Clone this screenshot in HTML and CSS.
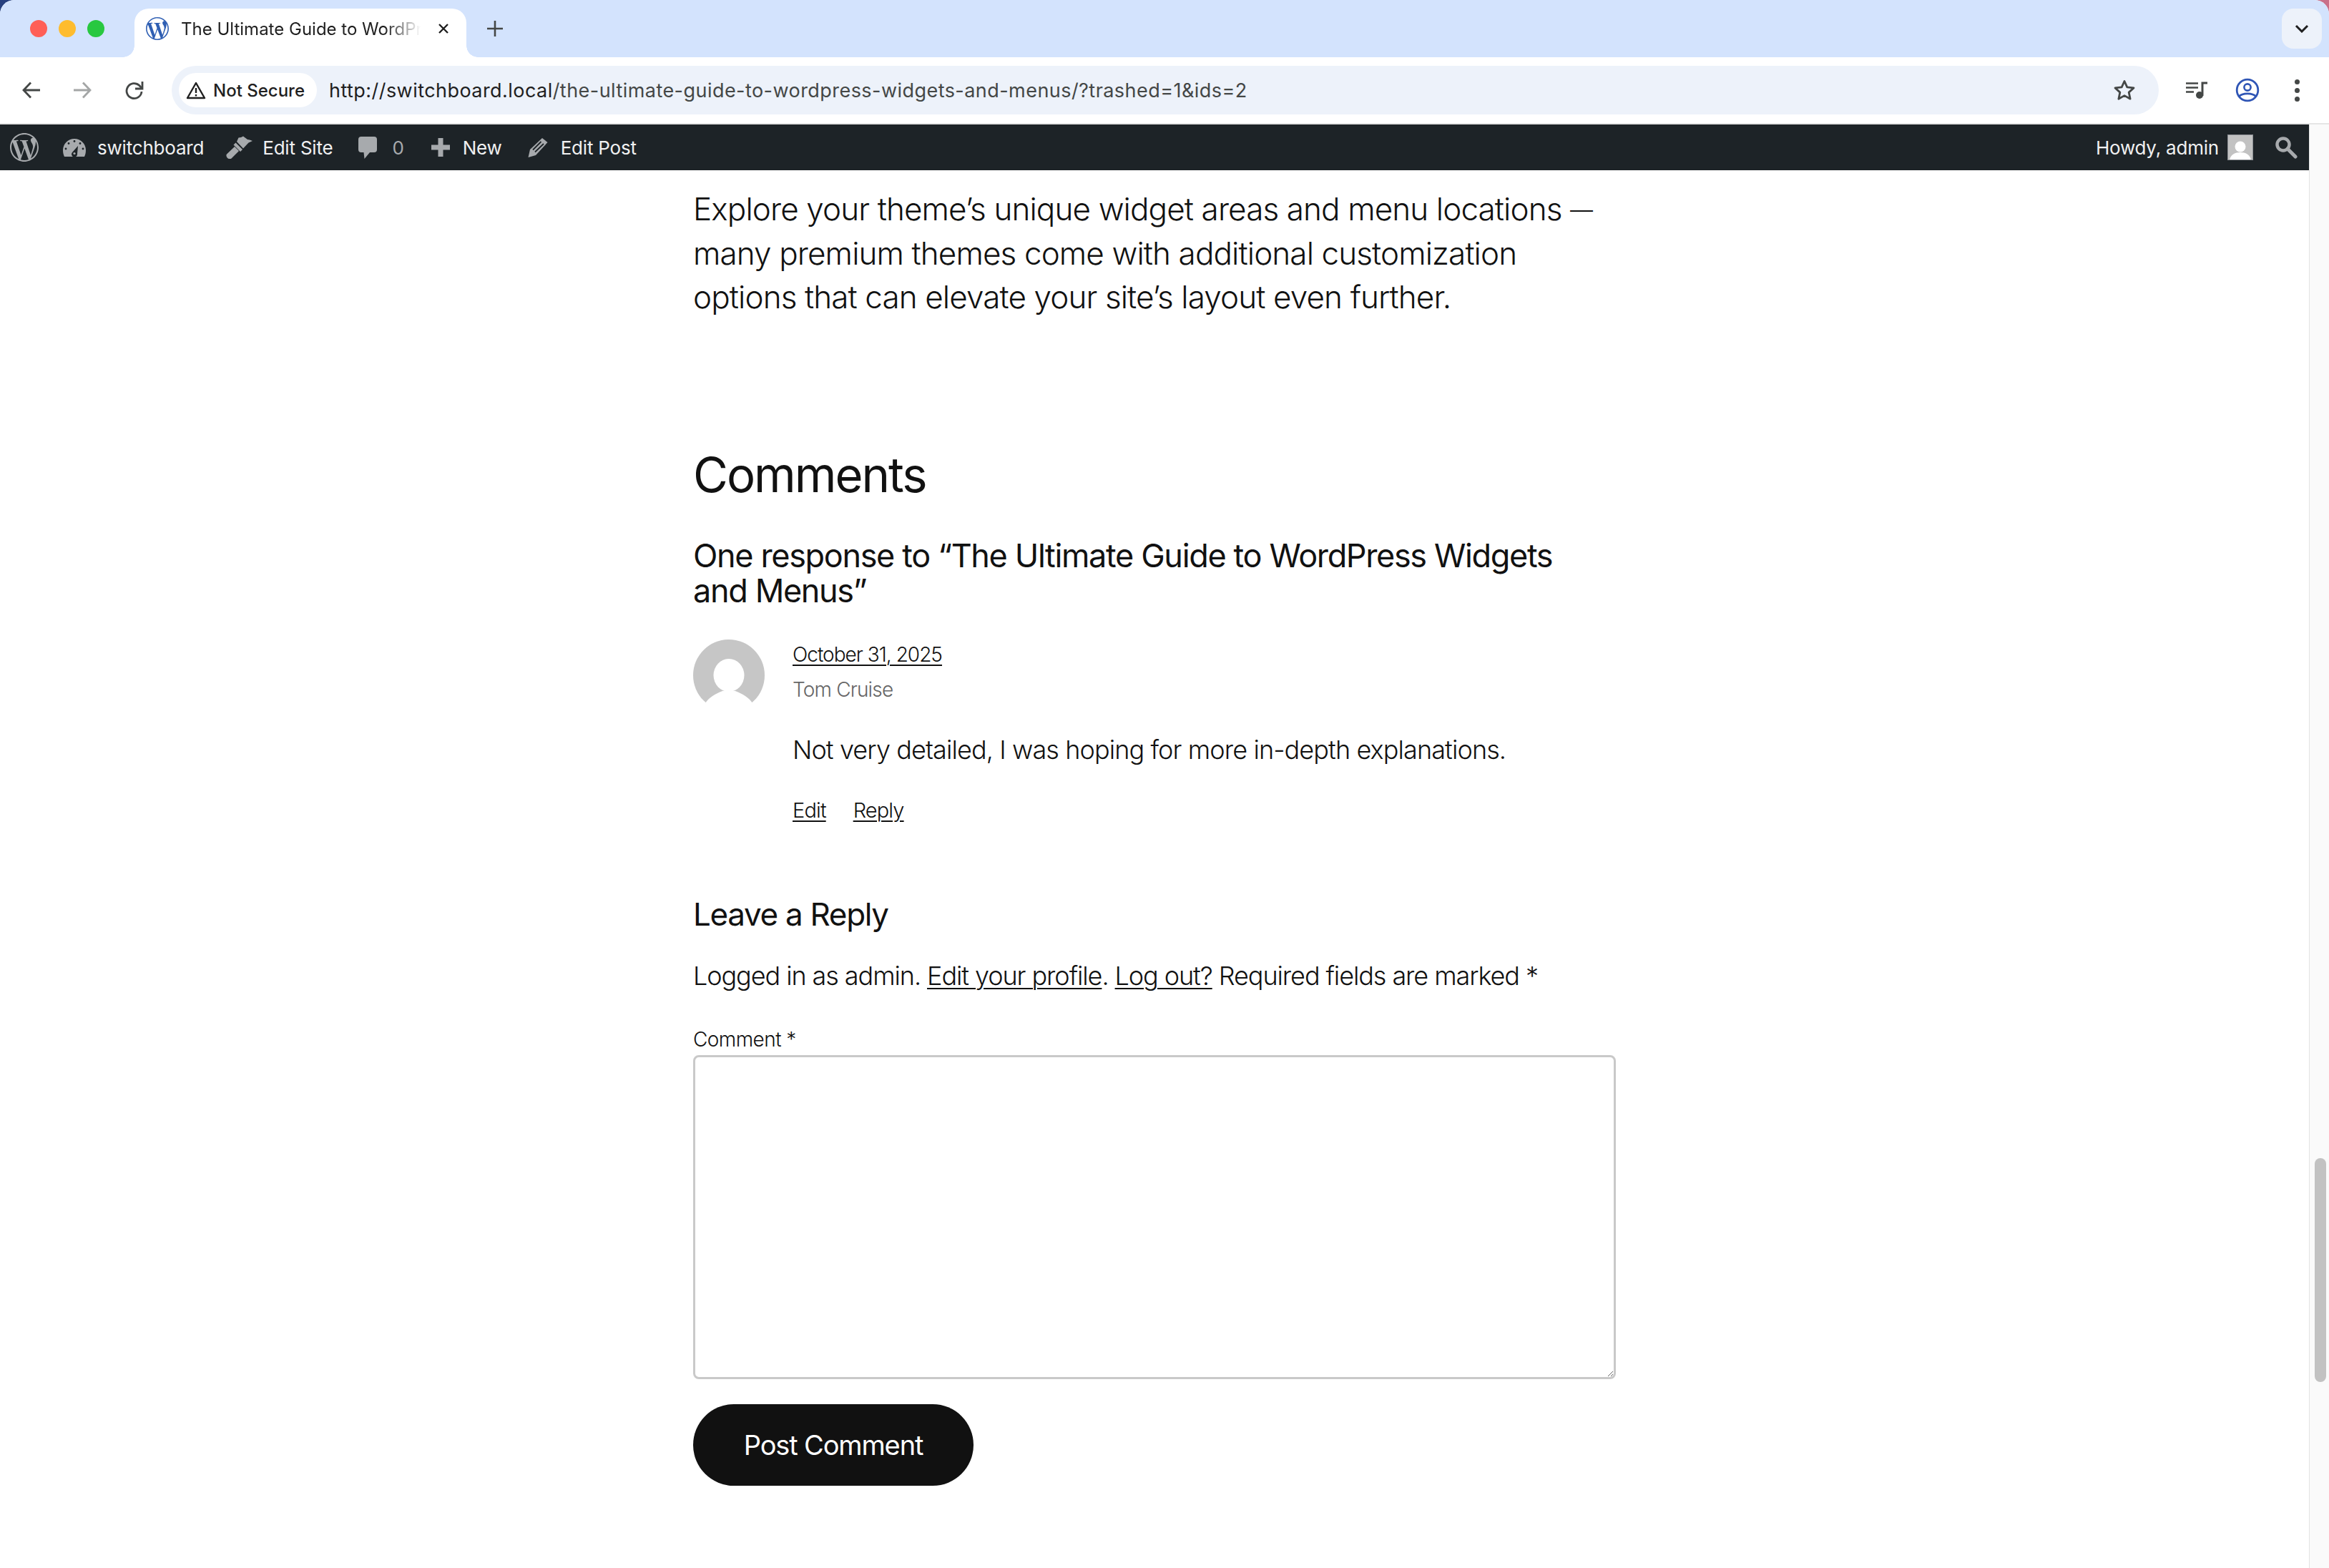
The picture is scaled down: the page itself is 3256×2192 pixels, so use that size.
FILE: index.html
```html
<!DOCTYPE html>
<html lang="en">
<head>
  <meta charset="UTF-8" />
  <title>The Ultimate Guide to WordPress Widgets and Menus</title>
  <link rel="stylesheet" href="styles.css">
</head>
<body>
  <svg class="defs" width="0" height="0">
    <symbol id="wp" viewBox="0 0 24 24"><path fill-rule="evenodd" d="M21.469 6.825c.84 1.537 1.318 3.3 1.318 5.175 0 3.979-2.156 7.456-5.363 9.325l3.295-9.527c.615-1.54.82-2.771.82-3.864 0-.405-.026-.78-.07-1.11m-7.981.105c.647-.03 1.232-.105 1.232-.105.582-.075.514-.93-.067-.899 0 0-1.755.135-2.88.135-1.064 0-2.85-.15-2.85-.15-.585-.03-.661.855-.075.885 0 0 .54.061 1.125.09l1.68 4.605-2.37 7.08L5.354 6.9c.649-.03 1.234-.1 1.234-.1.585-.075.516-.93-.065-.896 0 0-1.746.138-2.874.138-.2 0-.438-.008-.69-.015C4.911 3.15 8.235 1.215 12 1.215c2.809 0 5.365 1.072 7.286 2.833-.046-.003-.091-.009-.141-.009-1.06 0-1.812.923-1.812 1.914 0 .89.513 1.643 1.06 2.531.411.72.89 1.643.89 2.977 0 .915-.354 1.994-.821 3.479l-1.075 3.585-3.9-11.61.001.014zM12 22.784c-1.059 0-2.081-.153-3.048-.437l3.237-9.406 3.315 9.087c.024.053.05.101.078.149-1.12.393-2.325.609-3.582.609M1.211 12c0-1.564.336-3.05.935-4.39L7.29 21.709C3.694 19.96 1.212 16.271 1.211 12M12 0C5.385 0 0 5.385 0 12s5.385 12 12 12 12-5.385 12-12S18.615 0 12 0"/></symbol>
  </svg>

  <div class="window">
    <!-- tab strip -->
    <div class="tabbar">
      <div class="lights"><span class="light red"></span><span class="light amber"></span><span class="light green"></span></div>
      <div class="tab">
        <span class="favicon"><svg width="32" height="32"><use href="#wp"/></svg></span>
        <span class="tab-title">The Ultimate Guide to WordPress Widgets and Menus</span>
        <svg class="tab-close" width="16" height="16" viewBox="0 0 16 16"><path d="M2 2l12 12M14 2L2 14" stroke="#1f1f1f" stroke-width="2.4" fill="none"/></svg>
      </div>
      <svg class="new-tab" width="24" height="24" viewBox="0 0 24 24"><path d="M12 1v22M1 12h22" stroke="#444746" stroke-width="2.6" fill="none"/></svg>
      <div class="tab-search"><svg width="20" height="12" viewBox="0 0 20 12"><path d="M2 2l8 8 8-8" stroke="#1f1f1f" stroke-width="3" fill="none"/></svg></div>
    </div>

    <!-- toolbar -->
    <div class="toolbar">
      <svg class="tool" width="28" height="28" viewBox="0 0 28 28"><path d="M26 14H4M13 3.500L3 14l10 10.500" stroke="#444746" stroke-width="2.800" fill="none"/></svg>
      <svg class="tool tool-fwd" width="28" height="28" viewBox="0 0 28 28"><path d="M2 14h22M15 3.500L25 14 15 24.500" stroke="#a4a6a6" stroke-width="2.800" fill="none"/></svg>
      <svg class="tool tool-reload" width="28" height="30" viewBox="0 0 28 30"><path d="M24 17a10.500 10.500 0 1 1-3.200-8.500L24 12" stroke="#444746" stroke-width="2.800" fill="none"/><path d="M25 3v10H15" fill="none" stroke="#444746" stroke-width="2.800"/></svg>
      <div class="omnibox">
        <div class="chip">
          <svg width="28" height="26" viewBox="0 0 28 26"><path d="M14 3L26 24H2z" stroke="#1f1f1f" stroke-width="2.400" fill="none" stroke-linejoin="round"/><path d="M14 10v7M14 19v2.500" stroke="#1f1f1f" stroke-width="2.400" fill="none"/></svg>
          <span>Not Secure</span>
        </div>
        <div class="url"><span class="url-host">http://switchboard.local</span>/the-ultimate-guide-to-wordpress-widgets-and-menus/?trashed=1&amp;ids=2</div>
        <svg class="star" width="32" height="32" viewBox="0 0 32 32"><path d="M16 3.500l3.800 8.400 9.200 1-6.800 6.200 1.900 9.100L16 23.600l-8.100 4.600 1.900-9.100L3 12.900l9.200-1z" stroke="#444746" stroke-width="2.800" fill="none" stroke-linejoin="round"/></svg>
      </div>
      <svg class="media" width="32" height="24" viewBox="0 0 32 24"><path d="M1 2.500h17M1 8.500h17M1 14.500h11" stroke="#444746" stroke-width="2.600" fill="none"/><path d="M24 20V2h7" stroke="#444746" stroke-width="3" fill="none"/><circle cx="20" cy="19" r="5" fill="#444746"/></svg>
      <svg class="profile" width="34" height="34" viewBox="0 0 34 34"><circle cx="17" cy="17" r="14.800" stroke="#2f55b5" stroke-width="2.800" fill="none"/><circle cx="17" cy="13" r="4.600" stroke="#2f55b5" stroke-width="2.600" fill="none"/><path d="M5 26c5-5.500 19-5.500 24 0" stroke="#2f55b5" stroke-width="2.800" fill="none"/></svg>
      <div class="dots"><span></span><span></span><span></span></div>
    </div>

    <div class="viewport">
      <div class="page">
        <!-- wp admin bar -->
        <div class="adminbar">
          <div class="ab-left">
            <svg class="ab-logo" width="40" height="40"><use href="#wp"/></svg>
            <div class="ab-item ab-site">
              <svg width="32" height="25" viewBox="0 0 32 25"><path d="M16 0C7 0 0 7 0 16c0 3.500.8 6.500 2 9h28c1.200-2.500 2-5.500 2-9C32 7 25 0 16 0z"/><g fill="#1d2327"><circle cx="16" cy="3.500" r="1.400"/><circle cx="8" cy="6.500" r="1.400"/><circle cx="24" cy="6.500" r="1.400"/><circle cx="4" cy="14" r="1.400"/><circle cx="28" cy="14" r="1.400"/><path d="M21 10l-1 11a4 4 0 1 1-7-2z"/></g><circle cx="16" cy="20.500" r="1.600"/></svg>
              <span>switchboard</span>
            </div>
            <div class="ab-item ab-brush">
              <svg width="37" height="32" viewBox="0 0 37 32"><path d="M1 25.500l11-10.500 6 6-10.500 10.500c-1.500 1.300-3.800.8-5.300-.6S-.3 27 1 25.500z"/><path d="M10.500 12.500l3-3 9.500 9.500-3 3z"/><path d="M15 8l9 9.500 7.500-8 5.500-2.500-4-1.500-3-.5-6-4.500-3 1.500-3.500.5z"/></svg>
              <span>Edit Site</span>
            </div>
            <div class="ab-item ab-count">
              <svg width="26" height="31" viewBox="0 0 26 31"><path d="M4 0h18a4 4 0 0 1 4 4v14a4 4 0 0 1-4 4h-6l-7.500 9-1-9H4a4 4 0 0 1-4-4V4a4 4 0 0 1 4-4z"/></svg>
              <span>0</span>
            </div>
            <div class="ab-item ab-plus">
              <svg width="26" height="26" viewBox="0 0 26 26"><path d="M9.500 0h7v9.500H26v7h-9.500V26h-7v-9.500H0v-7h9.500z"/></svg>
              <span>New</span>
            </div>
            <div class="ab-item">
              <svg width="28" height="28" viewBox="0 0 28 28"><path d="M20 1l7.500 6L11 25 .5 28 3 17z"/><path d="M7 17.500L18.500 6M10 20.500L22 9" stroke="#1d2327" stroke-width="1.800" fill="none"/></svg>
              <span>Edit Post</span>
            </div>
          </div>
          <div class="ab-right">
            <span>Howdy, admin</span>
            <svg class="ab-avatar" width="36" height="36" viewBox="0 0 36 36"><rect width="36" height="36" fill="#c2c2c2"/><circle cx="18" cy="17" r="7.500" fill="#fff"/><path d="M3 36c1-8 8-11 15-11s14 3 15 11z" fill="#fff"/><rect x=".5" y=".5" width="35" height="35" fill="none" stroke="#8c8f94"/></svg>
            <svg class="ab-search" width="32" height="32" viewBox="0 0 32 32"><circle cx="12" cy="12" r="8.500" stroke="#a7aaad" stroke-width="4.500" fill="none"/><path d="M18 18l11 11" stroke="#a7aaad" stroke-width="5" stroke-linecap="round"/></svg>
          </div>
        </div>

        <!-- post content -->
        <main class="post">
          <p class="lead">Explore your theme’s unique widget areas and menu locations <span class="dash">—</span><br>many premium themes come with additional customization<br>options that can elevate your site’s layout even further.</p>

          <h2 class="comments-title">Comments</h2>
          <h3 class="responses">One response to “The Ultimate Guide to WordPress Widgets<br>and Menus”</h3>

          <div class="comment">
            <div class="comment-avatar">
              <svg width="100" height="100" viewBox="0 0 100 100"><circle cx="50" cy="50" r="50" fill="#c6c6c6"/><ellipse cx="50" cy="50" rx="21.500" ry="23" fill="#fff"/><path d="M41 72C31 76 22 81 17 89v11h66V89C78 81 69 76 59 72z" fill="#fff"/></svg>
            </div>
            <div class="comment-body">
              <a class="comment-date" href="#">October 31, 2025</a>
              <div class="comment-author">Tom Cruise</div>
              <p class="comment-text">Not very detailed, I was hoping for more in-depth explanations.</p>
              <div class="comment-links"><a href="#">Edit</a><a href="#">Reply</a></div>
            </div>
          </div>

          <h3 class="reply-title">Leave a Reply</h3>
          <p class="logged-in">Logged in as admin. <a href="#">Edit your profile</a>. <a href="#">Log out?</a> Required fields are marked *</p>
          <label class="comment-label" for="comment">Comment *</label>
          <textarea class="comment-input" id="comment"></textarea>
          <button class="submit">Post Comment</button>
        </main>
      </div>
      <div class="scrollbar"><div class="thumb"></div></div>
    </div>
  </div>
</body>
</html>
```

FILE: styles.css
```css
* { margin: 0; padding: 0; box-sizing: border-box; }
html, body { width: 100%; height: 100%; overflow: hidden; }
body {
  background: linear-gradient(90deg, #27407f 0%, #27407f 50%, #c9708a 50%, #c9708a 100%);
  font-family: 'Inter', 'Liberation Sans', sans-serif;
  color: #111;
}
.defs { position: absolute; }
a { color: inherit; text-decoration: underline; text-decoration-thickness: 2px; text-underline-offset: 4px; }

.window { height: 100%; display: flex; flex-direction: column; background: #fff; border-radius: 20px 20px 0 0; overflow: hidden; }

/* tab strip */
.tabbar { height: 80px; background: #d3e3fd; display: flex; align-items: flex-end; padding-left: 42px; position: relative; }
.lights { display: flex; gap: 16px; align-self: flex-start; margin-top: 28px; }
.light { width: 24px; height: 24px; border-radius: 50%; }
.red { background: #ff5f57; }
.amber { background: #febc2e; }
.green { background: #28c840; }
.tab {
  width: 464px; height: 68px; margin-left: 42px;
  background: #fff; border-radius: 20px 20px 0 0;
  display: flex; align-items: center; padding: 0 24px 12px 16px;
  position: relative;
}
.tab:before, .tab:after {
  content: ''; position: absolute; bottom: 0; width: 16px; height: 16px;
  background: radial-gradient(circle at 0 0, #d3e3fd 15.500px, #fff 16px);
}
.tab:before { left: -16px; }
.tab:after { right: -16px; background: radial-gradient(circle at 100% 0, #d3e3fd 15.500px, #fff 16px); }
.favicon { width: 32px; height: 32px; fill: #2f5fb3; flex: none; }
.favicon svg { display: block; }
.tab-title {
  flex: 1; margin: 0 24px 0 17px; overflow: hidden; white-space: nowrap;
  font-size: 24px; color: #1f1f1f;
  -webkit-mask-image: linear-gradient(90deg, #000 85%, transparent 100%);
  mask-image: linear-gradient(90deg, #000 85%, transparent 100%);
}
.tab-close { flex: none; }
.new-tab { align-self: flex-start; margin: 28px 0 0 28px; }
.tab-search {
  width: 56px; height: 56px; border-radius: 16px; background: #edf2fa;
  display: flex; align-items: center; justify-content: center;
  margin-left: auto; margin-right: 10px; align-self: flex-start; margin-top: 12px;
}

/* toolbar */
.toolbar {
  height: 92px; background: #fff; border-radius: 16px 16px 0 0;
  display: flex; align-items: center; padding-left: 30px;
  position: relative;
}
.tool { flex: none; }
.tool-fwd { margin-left: 43px; }
.tool-reload { margin-left: 45px; }
.omnibox {
  width: 2778px; height: 68px; margin-left: 38px;
  background: #edf2fa; border-radius: 34px;
  display: flex; align-items: center; padding: 0 32px 0 10px;
}
.chip {
  width: 193px; height: 48px; background: #fff; border-radius: 24px;
  display: flex; align-items: center; gap: 10px; padding-left: 10px;
  font-size: 24px; font-weight: 500; color: #1f1f1f; white-space: nowrap;
}
.url { margin-left: 17px; font-size: 27px; letter-spacing: 0.45px; color: #444746; white-space: nowrap; flex: 1; }
.url-host { color: #1f1f1f; }
.star { flex: none; }
.media { margin-left: 37px; flex: none; }
.profile { margin-left: 38px; flex: none; }
.dots { margin-left: 49px; display: flex; flex-direction: column; gap: 5px; }
.dots span { width: 7px; height: 7px; border-radius: 50%; background: #444746; }

/* page + scrollbar */
.viewport { flex: 1; display: flex; min-height: 0; border-top: 2px solid #e6e6e6; }
.page { flex: 1; min-width: 0; }
.scrollbar { width: 28px; background: #fafafa; border-left: 1px solid #e3e3e3; padding: 1445px 4px 0 7px; }
.thumb { height: 313px; background: #c2c2c2; border-radius: 8px; }

/* admin bar */
.adminbar {
  height: 64px; background: #1d2327; color: #f0f0f1;
  display: flex; align-items: center; justify-content: space-between;
  padding: 0 16px 0 14px; font-size: 26px; letter-spacing: -0.2px; white-space: nowrap;
}
.adminbar svg { fill: #a7aaad; flex: none; }
.ab-left { display: flex; align-items: center; gap: 36px; }
.ab-item { display: flex; align-items: center; gap: 18px; }
.ab-site { gap: 16px; margin-left: -2px; }
.ab-brush { gap: 14px; margin-left: -5px; }
.ab-count { gap: 21px; }
.ab-count span { color: #a7aaad; }
.ab-plus { margin-left: 2px; }
.ab-right { display: flex; align-items: center; }
.ab-avatar { margin-left: 12px; }
.ab-search { margin-left: 30px; }

/* post */
.post { width: 1290px; margin: 0 auto; padding-top: 24px; font-weight: 300; }
.lead { font-size: 44px; line-height: 61.6px; letter-spacing: -0.02em; }
.dash { font-size: 32px; line-height: 0; vertical-align: 3px; }
.comments-title { font-size: 67px; line-height: 82px; font-weight: 400; letter-spacing: -0.03em; margin-top: 176px; }
.responses { font-size: 45px; line-height: 49.500px; font-weight: 400; letter-spacing: -0.03em; margin-top: 47px; }
.comment { display: flex; gap: 39px; margin-top: 43px; }
.comment-avatar { flex: none; width: 100px; }
.comment-avatar svg { display: block; }
.comment-body { flex: 1; }
.comment-date { font-size: 28px; line-height: 42px; letter-spacing: -0.035em; display: inline-block; }
.comment-author { font-size: 28px; line-height: 42px; letter-spacing: -0.03em; color: #666; margin-top: 7px; }
.comment-text { font-size: 36px; line-height: 54px; letter-spacing: -0.025em; margin-top: 36px; }
.comment-links { font-size: 29px; line-height: 42px; letter-spacing: -0.03em; margin-top: 37px; display: flex; gap: 38px; }
.reply-title { font-size: 44px; line-height: 53px; font-weight: 400; letter-spacing: -0.03em; margin-top: 98px; }
.logged-in { font-size: 36px; line-height: 54px; letter-spacing: -0.03em; margin-top: 32px; }
.comment-label { display: block; font-size: 28px; line-height: 42px; letter-spacing: -0.02em; margin-top: 41px; }
.comment-input {
  display: block; width: 100%; height: 453px; margin-top: 1px;
  border: 3px solid #c9c9c9; border-radius: 8px; background: #fff;
}
.submit {
  display: block; width: 392px; height: 114px; margin-top: 35px;
  background: #111; color: #fff; border: none; border-radius: 57px;
  font-family: inherit; font-size: 38px; font-weight: 400; letter-spacing: -0.03em;
}
```
